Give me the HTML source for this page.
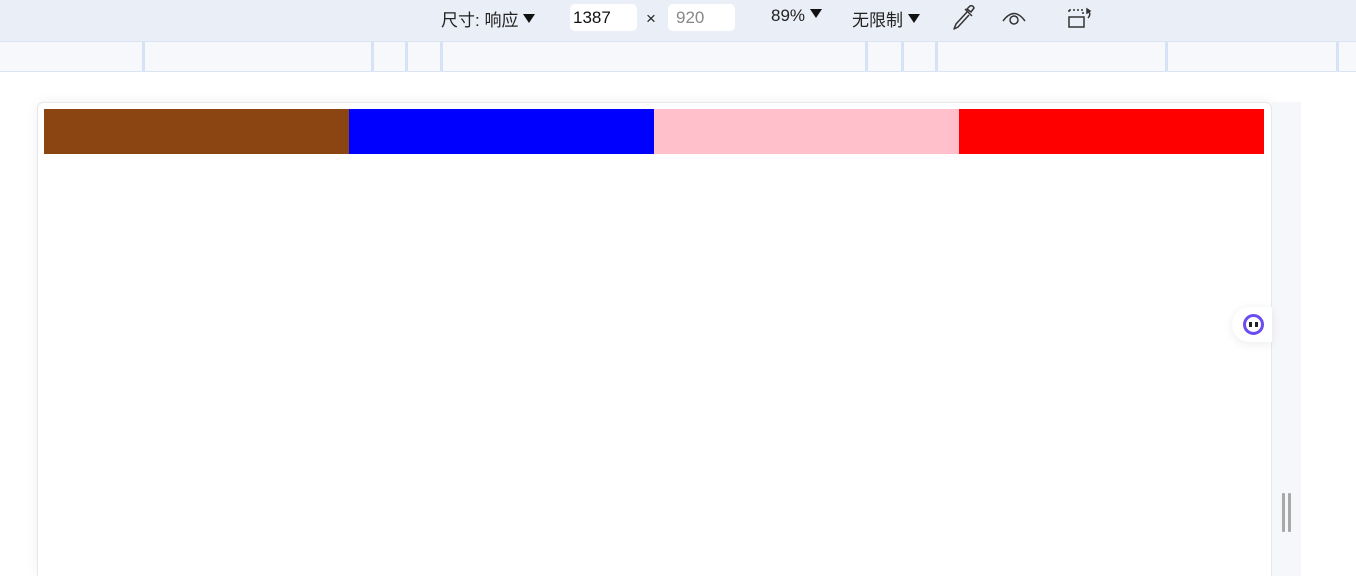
<!DOCTYPE html>
<html style="overflow:hidden;height:576px"><head><meta charset="utf-8"><style>
*{margin:0;padding:0;box-sizing:border-box}
body{width:1356px;height:576px;overflow:hidden;background:#fff;font-family:"Liberation Sans","Noto Sans CJK SC",sans-serif;position:relative}
.top{position:absolute;left:0;top:0;width:1356px;height:41px;background:#eaeef6}
.ruler{position:absolute;left:0;top:41px;width:1356px;height:31px;background:#f6f8fc;border-top:1px solid #dbe4f4;border-bottom:1px solid #dbe4f4}
.ruler i{position:absolute;top:0;width:3px;height:29px;background:#d6e2f6}
.t{position:absolute;top:6px;font-size:17px;color:#222;white-space:nowrap}
.inp{position:absolute;top:4px;height:27px;background:#fff;border-radius:5px;font-size:17px;padding:4px 3px;}
.tri{display:inline-block;width:0;height:0;border-left:6px solid transparent;border-right:6px solid transparent;border-top:9px solid #111;margin-left:5px;vertical-align:3px}
.frame{position:absolute;left:37px;top:102px;width:1235px;height:474px;background:#fff;border:1px solid #e8e8ec;border-bottom:none;border-radius:6px 6px 0 0;box-shadow:0 0 14px rgba(0,0,0,0.06)}
.side{position:absolute;left:1272px;top:102px;width:29px;height:474px;background:#f6f7fb}
.bar{position:absolute;top:109px;height:45px}
</style></head><body>
<div class="top"></div>
<div class="t" style="left:441px">尺寸: 响应<span class="tri"></span></div>
<div class="inp" style="left:570px;width:67px;color:#111">1387</div>
<div class="t" style="left:646px;top:9px">×</div>
<div class="inp" style="left:668px;width:67px;color:#888;padding-left:8px">920</div>
<div class="t" style="left:771px">89%<span class="tri"></span></div>
<div class="t" style="left:852px">无限制<span class="tri"></span></div>
<svg style="position:absolute;left:950px;top:3px" width="28" height="28" viewBox="0 0 28 28" fill="none" stroke="#333" stroke-width="1.5" stroke-linejoin="round"><path d="M17 6 L20 3 Q23 2 24 5 L21 9 Z"/><path d="M15 6 L22 13"/><path d="M17 9 L6 21 L4 26 L8 24 L19 12"/></svg>
<svg style="position:absolute;left:1000px;top:6px" width="28" height="22" viewBox="0 0 28 22" fill="none" stroke="#333" stroke-width="1.5"><path d="M3 15 Q14 0 25 15"/><circle cx="14" cy="14" r="4"/></svg>
<svg style="position:absolute;left:1065px;top:5px" width="30" height="26" viewBox="0 0 30 26" fill="none" stroke="#333" stroke-width="1.5"><path d="M4 5 V9 M4 5 H18 V9" stroke-dasharray="2 2"/><rect x="4" y="12" width="15" height="10"/><path d="M22 6 Q27 8 23 13"/><path d="M22 4 L22 8 L25 6 Z" fill="#333"/></svg>
<div class="ruler"><i style="left:142px"></i><i style="left:371px"></i><i style="left:405px"></i><i style="left:440px"></i><i style="left:865px"></i><i style="left:901px"></i><i style="left:935px"></i><i style="left:1165px"></i><i style="left:1336px"></i></div>
<div class="frame"></div>
<div class="bar" style="left:44px;width:305px;background:#8b4513"></div>
<div class="bar" style="left:349px;width:305px;background:#0000ff"></div>
<div class="bar" style="left:654px;width:305px;background:#ffc0cb"></div>
<div class="bar" style="left:959px;width:305px;background:#ff0000"></div>
<div class="side"></div>
<div style="position:absolute;left:1282px;top:493px;width:3px;height:39px;background:#a8a8a8;border-radius:1px"></div>
<div style="position:absolute;left:1288px;top:493px;width:3px;height:39px;background:#a8a8a8;border-radius:1px"></div>
<div style="position:absolute;left:1232px;top:307px;width:40px;height:35px;background:#fff;border-radius:18px 0 0 18px;box-shadow:0 2px 10px rgba(0,0,0,0.08)"></div>
<div style="position:absolute;left:1243px;top:314px;width:21px;height:21px;border-radius:50%;border:3px solid #6b4cf0;background:#fff"></div>
<div style="position:absolute;left:1249px;top:322px;width:3px;height:5px;background:#222"></div>
<div style="position:absolute;left:1255px;top:322px;width:3px;height:5px;background:#222"></div>
</body></html>
